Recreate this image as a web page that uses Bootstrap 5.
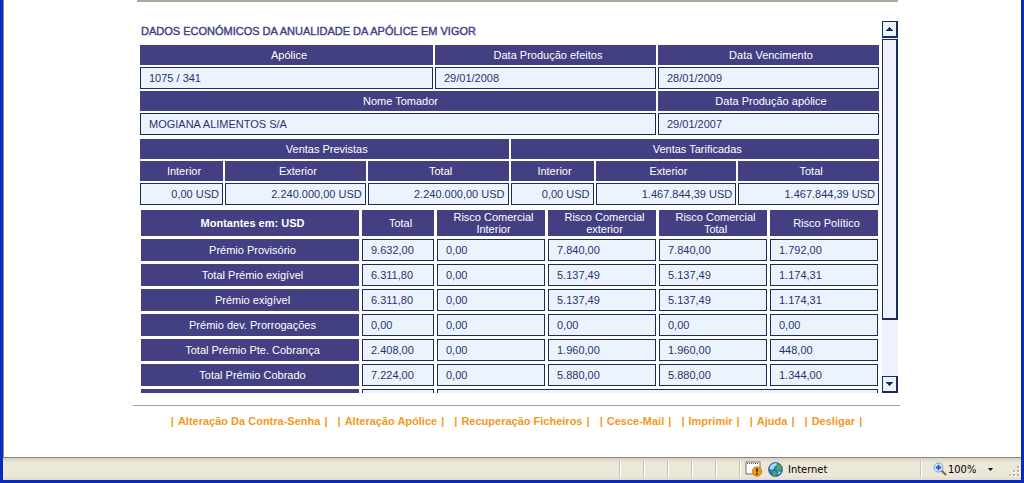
<!DOCTYPE html>
<html lang="pt">
<head>
<meta charset="utf-8">
<meta name="viewport" content="width=device-width, initial-scale=1">
<title>Dados económicos da apólice</title>
<link href="https://cdn.jsdelivr.net/npm/bootstrap@5.3.0/dist/css/bootstrap.min.css" rel="stylesheet">
<style>
  :root { --ink: #1c2a5e; --head: #424083; --cell: #ebf4fd; --track: #edf2fe; }
  body { font-family: "Liberation Sans", Arial, sans-serif; font-size: 11px; line-height: 12px; color: #2b3170; background: #fff; }
  .browser { border: solid #0a2bbd; border-width: 0 3px 3px; min-height: 100vh; }
  .page { border-left: 1px solid #8a8d92; padding-left: 8px; }
  .sheet { max-width: 767px; }
  .panel { border-top: 2px solid #aaab98; margin: 0 2px 12px 4px; padding-top: 19px; padding-left: 1px; }
  .scroller { height: 372px; }
  .heading { font-size: 11px; line-height: 20px; font-weight: normal; -webkit-text-stroke: .4px; color: #424083; padding-left: 3px; margin: 0 0 2px; }
  .data { width: 100%; table-layout: fixed; border-collapse: separate; border-spacing: 2px; }
  .data th, .data td { height: 22px; padding: 0 8px; vertical-align: middle; }
  .data th { height: 20px; padding: 0 2px 0 7px; background: var(--head); color: #fff; font-weight: normal; text-align: center; }
  .data td { border: 1px solid var(--ink); background: var(--cell); }
  .data.sales td { text-align: right; padding: 0 3px; }
  .data.amounts { border-spacing: 3px; }
  .data.amounts thead th { height: 26px; }
  .data.amounts tbody th { height: 22px; }
  .w-date { width: 221px; }
  .w-inner { width: 83px; }
  .w-total { width: 72px; } .w-risk { width: 108px; }
  .bar { width: 16px; flex: none; margin-left: 1px; background: var(--track); }
  .bar button { width: 100%; height: 17px; flex: none; padding: 0; background: var(--cell); border: 1px solid var(--ink); border-right-width: 2px; border-bottom-width: 2px; display: flex; align-items: center; justify-content: center; border-radius: 0; }
  .thumb { height: 83%; margin-top: 1px; background: var(--track); border: 1px solid var(--ink); border-right-width: 2px; border-bottom-width: 2px; }
  .links { border-top: 1px solid #a0a0a0; padding-top: 8px; column-gap: 10px; white-space: nowrap; font-weight: bold; line-height: 14px; color: #f29a1d; }
  .links a { color: inherit; text-decoration: none; padding: 0 1px; }
  .status { height: 23px; border-top: 1px solid #88857b; background: linear-gradient(#d5d0c2, #ece9d8 5px, #ece7d8 18px, #dfdacb); color: #000; font: 11px/20px "DejaVu Sans Condensed", sans-serif; }
  .status .label { padding-top: 2px; }
  .slot { width: 24px; height: 18px; border-left: 1px solid #c5c1b1; box-shadow: inset 1px 0 #fff; flex: none; }
  .zone { width: 181px; padding-left: 5px; column-gap: 5px; }
  .zoomer { width: 101px; padding-left: 12px; }
  .zoomer button { border: 0; background: none; padding: 0; color: inherit; font: inherit; column-gap: 1px; }
</style>
</head>
<body>
<div class="browser d-flex flex-column">
  <main class="page flex-grow-1">
    <div class="sheet mx-auto">
      <section class="panel">
        <div class="scroller d-flex">
          <div class="flex-grow-1 overflow-hidden">
            <h1 class="heading">DADOS ECONÓMICOS DA ANUALIDADE DA APÓLICE EM VIGOR</h1>
            <table class="data">
              <colgroup><col><col class="w-date"><col class="w-date"></colgroup>
              <tbody>
                <tr><th>Apólice</th><th>Data Produção efeitos</th><th>Data Vencimento</th></tr>
                <tr><td>1075 / 341</td><td>29/01/2008</td><td>28/01/2009</td></tr>
                <tr><th colspan="2">Nome Tomador</th><th>Data Produção apólice</th></tr>
                <tr><td colspan="2">MOGIANA ALIMENTOS S/A</td><td>29/01/2007</td></tr>
              </tbody>
            </table>
            <table class="data sales">
              <colgroup><col class="w-inner"><col><col><col class="w-inner"><col><col></colgroup>
              <thead>
                <tr><th colspan="3">Ventas Previstas</th><th colspan="3">Ventas Tarificadas</th></tr>
                <tr><th>Interior</th><th>Exterior</th><th>Total</th><th>Interior</th><th>Exterior</th><th>Total</th></tr>
              </thead>
              <tbody>
                <tr><td>0,00 USD</td><td>2.240.000,00 USD</td><td>2.240.000,00 USD</td><td>0,00 USD</td><td>1.467.844,39 USD</td><td>1.467.844,39 USD</td></tr>
              </tbody>
            </table>
            <table class="data amounts">
              <colgroup><col><col class="w-total"><col class="w-risk"><col class="w-risk"><col class="w-risk"><col class="w-risk"></colgroup>
              <thead>
                <tr><th class="fw-bold">Montantes em: USD</th><th>Total</th><th>Risco Comercial<br>Interior</th><th>Risco Comercial<br>exterior</th><th>Risco Comercial<br>Total</th><th>Risco Político</th></tr>
              </thead>
              <tbody>
                <tr><th>Prémio Provisório</th><td>9.632,00</td><td>0,00</td><td>7.840,00</td><td>7.840,00</td><td>1.792,00</td></tr>
                <tr><th>Total Prémio exigível</th><td>6.311,80</td><td>0,00</td><td>5.137,49</td><td>5.137,49</td><td>1.174,31</td></tr>
                <tr><th>Prémio exigível</th><td>6.311,80</td><td>0,00</td><td>5.137,49</td><td>5.137,49</td><td>1.174,31</td></tr>
                <tr><th>Prémio dev. Prorrogações</th><td>0,00</td><td>0,00</td><td>0,00</td><td>0,00</td><td>0,00</td></tr>
                <tr><th>Total Prémio Pte. Cobrança</th><td>2.408,00</td><td>0,00</td><td>1.960,00</td><td>1.960,00</td><td>448,00</td></tr>
                <tr><th>Total Prémio Cobrado</th><td>7.224,00</td><td>0,00</td><td>5.880,00</td><td>5.880,00</td><td>1.344,00</td></tr>
                <tr><th></th><td></td><td colspan="4"></td></tr>
              </tbody>
            </table>
          </div>
          <div class="bar d-flex flex-column">
            <button type="button" aria-label="Subir"><svg width="7" height="4" viewBox="0 0 7 4" shape-rendering="crispEdges"><path d="M3 0h1v1h1v1h1v1h1v1H0V3h1V2h1V1h1z" fill="#1c2a5e"/></svg></button>
            <div class="flex-grow-1"><div class="thumb"></div></div>
            <button type="button" aria-label="Descer"><svg width="7" height="4" viewBox="0 0 7 4" shape-rendering="crispEdges"><path d="M0 0h7v1H6v1H5v1H4v1H3V3H2V2H1V1H0z" fill="#1c2a5e"/></svg></button>
          </div>
        </div>
      </section>
      <nav class="links d-flex flex-wrap justify-content-center">
        <span>| <a href="#">Alteração Da Contra-Senha</a> |</span>
        <span>| <a href="#">Alteração Apólice</a> |</span>
        <span>| <a href="#">Recuperação Ficheiros</a> |</span>
        <span>| <a href="#">Cesce-Mail</a> |</span>
        <span>| <a href="#">Imprimir</a> |</span>
        <span>| <a href="#">Ajuda</a> |</span>
        <span>| <a href="#">Desligar</a> |</span>
      </nav>
    </div>
  </main>
  <footer class="status d-flex align-items-center justify-content-end">
    <span class="slot"></span><span class="slot"></span><span class="slot"></span><span class="slot"></span><span class="slot"></span>
    <div class="slot zone d-flex align-items-center">
      <svg width="18" height="16" viewBox="0 0 18 16">
        <rect x="1" y="1" width="14" height="12" fill="#fff" stroke="#777264"/>
        <path d="M2 2.500h12" stroke="#57544b" stroke-dasharray="1 1"/>
        <circle cx="12" cy="10.500" r="4.800" fill="#e99a17" stroke="#b8690a" stroke-width=".6"/>
        <path d="M11 7.500h2l-.4 4h-1.200zM11.200 12.200h1.600v1.500h-1.600z" fill="#402000"/>
      </svg>
      <svg width="15" height="15" viewBox="0 0 15 15">
        <circle cx="7.500" cy="7.500" r="7" fill="#2872c5" stroke="#31568b" stroke-width=".8"/>
        <path d="M2.500 3.500Q5 .8 8.500 1L9 3 6.500 4.500 6 6.500 3.500 8 1.500 6.500z" fill="#a9dcf3"/>
        <path d="M8 2.500l3.500.2 2 3-.3 2.800-2-.5-2.200 1-1-2 1.300-1.500zM4.500 9l3 .5 1.500 2-1.500 2.500-2.500-1z" fill="#47b23d"/>
        <path d="M10.500 9l2.500 1-2 2.500-1-1z" fill="#9dd6ef"/>
      </svg>
      <span class="label">Internet</span>
    </div>
    <div class="slot zoomer d-flex align-items-center">
      <button type="button" class="d-flex align-items-center flex-grow-1">
        <svg width="14" height="14" viewBox="0 0 14 14">
          <path d="M8.500 8.500l4 4" stroke="#7c6250" stroke-width="2" stroke-linecap="round"/>
          <circle cx="5.500" cy="5.500" r="4.500" fill="#d7ebfc" stroke="#6ea0d8"/>
          <path d="M5.500 2.800v5.400M2.800 5.500h5.400" stroke="#1f58be" stroke-width="1.800"/>
        </svg>
        <span class="label">100%</span>
        <svg class="ms-auto me-3" width="5" height="3" viewBox="0 0 5 3"><path d="M0 0h5L2.500 3z"/></svg>
      </button>
      <svg class="align-self-end" width="12" height="12" viewBox="0 0 12 12" shape-rendering="crispEdges">
        <path d="M9 1h2v2H9zM5 5h2v2H5zM9 5h2v2H9zM1 9h2v2H1zM5 9h2v2H5zM9 9h2v2H9z" fill="#fff"/>
        <path d="M8 0h2v2H8zM4 4h2v2H4zM8 4h2v2H8zM0 8h2v2H0zM4 8h2v2H4zM8 8h2v2H8z" fill="#b8b4a2"/>
      </svg>
    </div>
  </footer>
</div>
<script src="https://cdn.jsdelivr.net/npm/bootstrap@5.3.0/dist/js/bootstrap.bundle.min.js"></script>
</body>
</html>
